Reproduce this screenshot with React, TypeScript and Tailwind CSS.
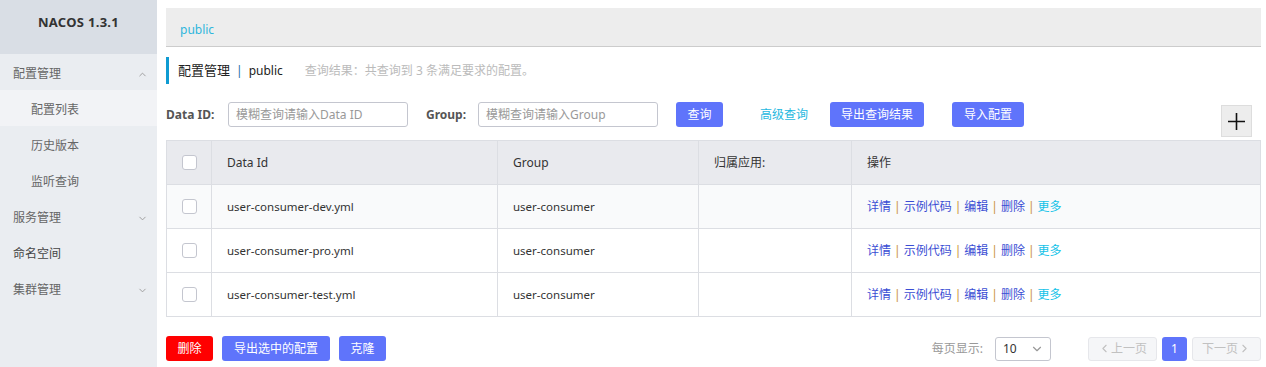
import React from "react";
import { FiChevronUp, FiChevronDown, FiChevronLeft, FiChevronRight } from "react-icons/fi";

const font = { fontFamily: '"Noto Sans", "Noto Sans CJK SC", sans-serif' };

const rows = [
  { id: "user-consumer-dev.yml", group: "user-consumer" },
  { id: "user-consumer-pro.yml", group: "user-consumer" },
  { id: "user-consumer-test.yml", group: "user-consumer" },
];

const Checkbox = () => (
  <span className="block w-[15px] h-[15px] rounded-[3px] border border-[#c4c6cf] bg-white" />
);

const Btn = ({ children, className = "" }: { children: React.ReactNode; className?: string }) => (
  <button className={"h-[25px] px-[11px] rounded-[3px] text-[12px] text-white bg-[#5f74fb] leading-none " + className}>
    {children}
  </button>
);

const Sidebar = () => (
  <div className="w-[157px] shrink-0 bg-[#eaedf1] text-[12px] text-[#666]">
    <div className="h-[54px] bg-[#d9dee5] flex items-start justify-center pt-[13px] text-[13px] font-bold text-[#333]" style={{ letterSpacing: "0.3px" }}>
      NACOS 1.3.1
    </div>
    <div className="h-[36px] flex items-center justify-between pl-[13px] pr-[9px] pt-[4px]">
      <span>配置管理</span>
      <FiChevronUp size={11} className="text-[#999]" />
    </div>
    <div className="h-[36px] flex items-center pl-[31px] pt-[4px] bg-[#f2f3f6]">配置列表</div>
    <div className="h-[36px] flex items-center pl-[31px] pt-[4px]">历史版本</div>
    <div className="h-[36px] flex items-center pl-[31px] pt-[4px]">监听查询</div>
    <div className="h-[36px] flex items-center justify-between pl-[13px] pr-[9px] pt-[4px]">
      <span>服务管理</span>
      <FiChevronDown size={11} className="text-[#999]" />
    </div>
    <div className="h-[36px] flex items-center pl-[13px] pt-[4px] text-[#444]">命名空间</div>
    <div className="h-[36px] flex items-center justify-between pl-[13px] pr-[9px] pt-[4px]">
      <span>集群管理</span>
      <FiChevronDown size={11} className="text-[#999]" />
    </div>
  </div>
);

const Sep = () => <span className="text-[#c9913a] mx-[3px]">|</span>;

export default function App() {
  return (
    <div className="w-[1266px] h-[367px] flex bg-white overflow-hidden" style={font}>
      <Sidebar />
      <div className="flex-1 pl-[9px] pr-[5px] pt-[8px]">
        <div className="h-[39px] bg-[#ededed] border-b border-[#cccccc] flex items-center pl-[14px] pt-[5px] text-[12px] text-[#2fb6dc]">
          public
        </div>
        <div className="mt-[10px] h-[27px] flex items-center border-l-[3px] border-[#0f9bd2] pl-[9px]">
          <span className="text-[13px] text-[#222]">配置管理</span>
          <span className="text-[12px] text-[#1d6fa5] mx-[6px]">|</span>
          <span className="text-[12px] text-[#222]">public</span>
          <span className="ml-[22px] text-[12px] text-[#bbbbbb]">查询结果：共查询到 3 条满足要求的配置。</span>
        </div>
        <div className="mt-[18px] flex items-start">
          <div className="flex items-center h-[25px]">
            <span className="text-[12px] font-bold text-[#555] w-[62px]">Data ID:</span>
            <div className="w-[180px] h-[25px] border border-[#c4c6cf] rounded-[3px] flex items-center px-[7px] text-[12px] text-[#999]">
              模糊查询请输入Data ID
            </div>
            <span className="ml-[18px] text-[12px] font-bold text-[#555] w-[52px]">Group:</span>
            <div className="w-[180px] h-[25px] border border-[#c4c6cf] rounded-[3px] flex items-center px-[7px] text-[12px] text-[#999]">
              模糊查询请输入Group
            </div>
            <Btn className="ml-[18px] w-[47px] px-0">查询</Btn>
            <span className="ml-[37px] text-[12px] text-[#1fb8e0]">高级查询</span>
            <Btn className="ml-[22px] w-[94px] px-0">导出查询结果</Btn>
            <Btn className="ml-[28px] w-[72px] px-0">导入配置</Btn>
          </div>
          <div className="ml-auto mr-[9px] mt-[3px] w-[31px] h-[32px] bg-[#ededed] border border-[#dddddd] flex items-center justify-center">
            <svg width="19" height="19" viewBox="0 0 19 19">
              <path d="M9.5 1v17M1 9.5h17" stroke="#111" strokeWidth="1.6" />
            </svg>
          </div>
        </div>
        <table className="mt-[3px] w-full border-collapse text-[12px] text-[#333] border border-[#dcdee3]">
          <thead>
            <tr className="h-[44px] bg-[#e9eaee]">
              <th className="w-[45px] border border-[#dcdee3] font-normal">
                <div className="flex justify-center"><Checkbox /></div>
              </th>
              <th className="w-[286px] border border-[#dcdee3] font-normal text-left pl-[15px]">Data Id</th>
              <th className="w-[201px] border border-[#dcdee3] font-normal text-left pl-[15px]">Group</th>
              <th className="w-[153px] border border-[#dcdee3] font-normal text-left pl-[15px]">归属应用:</th>
              <th className="border border-[#dcdee3] font-normal text-left pl-[15px]">操作</th>
            </tr>
          </thead>
          <tbody>
            {rows.map((r, i) => (
              <tr key={r.id} className={"h-[44px] " + (i === 0 ? "bg-[#f9fafb]" : "bg-white")}>
                <td className="border border-[#dcdee3]">
                  <div className="flex justify-center"><Checkbox /></div>
                </td>
                <td className="border border-[#dcdee3] pl-[15px] text-[11.5px]">{r.id}</td>
                <td className="border border-[#dcdee3] pl-[15px] text-[11.5px]">{r.group}</td>
                <td className="border border-[#dcdee3]"></td>
                <td className="border border-[#dcdee3] pl-[15px] text-[#3b4ed4]">
                  <span>详情</span><Sep /><span>示例代码</span><Sep /><span>编辑</span><Sep />
                  <span>删除</span><Sep /><span className="text-[#13c2e8]">更多</span>
                </td>
              </tr>
            ))}
          </tbody>
        </table>
        <div className="mt-[19px] flex items-center">
          <Btn className="bg-[#ff0000] w-[47px] px-0">删除</Btn>
          <Btn className="ml-[9px] w-[108px] px-0">导出选中的配置</Btn>
          <Btn className="ml-[9px] w-[47px] px-0">克隆</Btn>
          <span className="ml-auto text-[12px] text-[#999]">每页显示:</span>
          <div className="ml-[12px] w-[56px] h-[24px] border border-[#c4c6cf] rounded-[3px] flex items-center justify-between pl-[7px] pr-[6px] text-[12px] text-[#333]">
            <span>10</span>
            <FiChevronDown size={14} className="text-[#999]" />
          </div>
          <div className="ml-[37px] w-[69px] h-[24px] border border-[#e6e7eb] bg-[#f5f6f8] rounded-[3px] flex items-center justify-center text-[12px] text-[#c1c1c1]">
            <FiChevronLeft size={13} />
            <span>上一页</span>
          </div>
          <div className="ml-[5px] w-[25px] h-[24px] bg-[#5f74fb] rounded-[3px] flex items-center justify-center text-[12px] text-white">1</div>
          <div className="ml-[5px] w-[69px] h-[24px] border border-[#e6e7eb] bg-[#f5f6f8] rounded-[3px] flex items-center justify-center text-[12px] text-[#c1c1c1]">
            <span>下一页</span>
            <FiChevronRight size={13} />
          </div>
        </div>
      </div>
    </div>
  );
}
